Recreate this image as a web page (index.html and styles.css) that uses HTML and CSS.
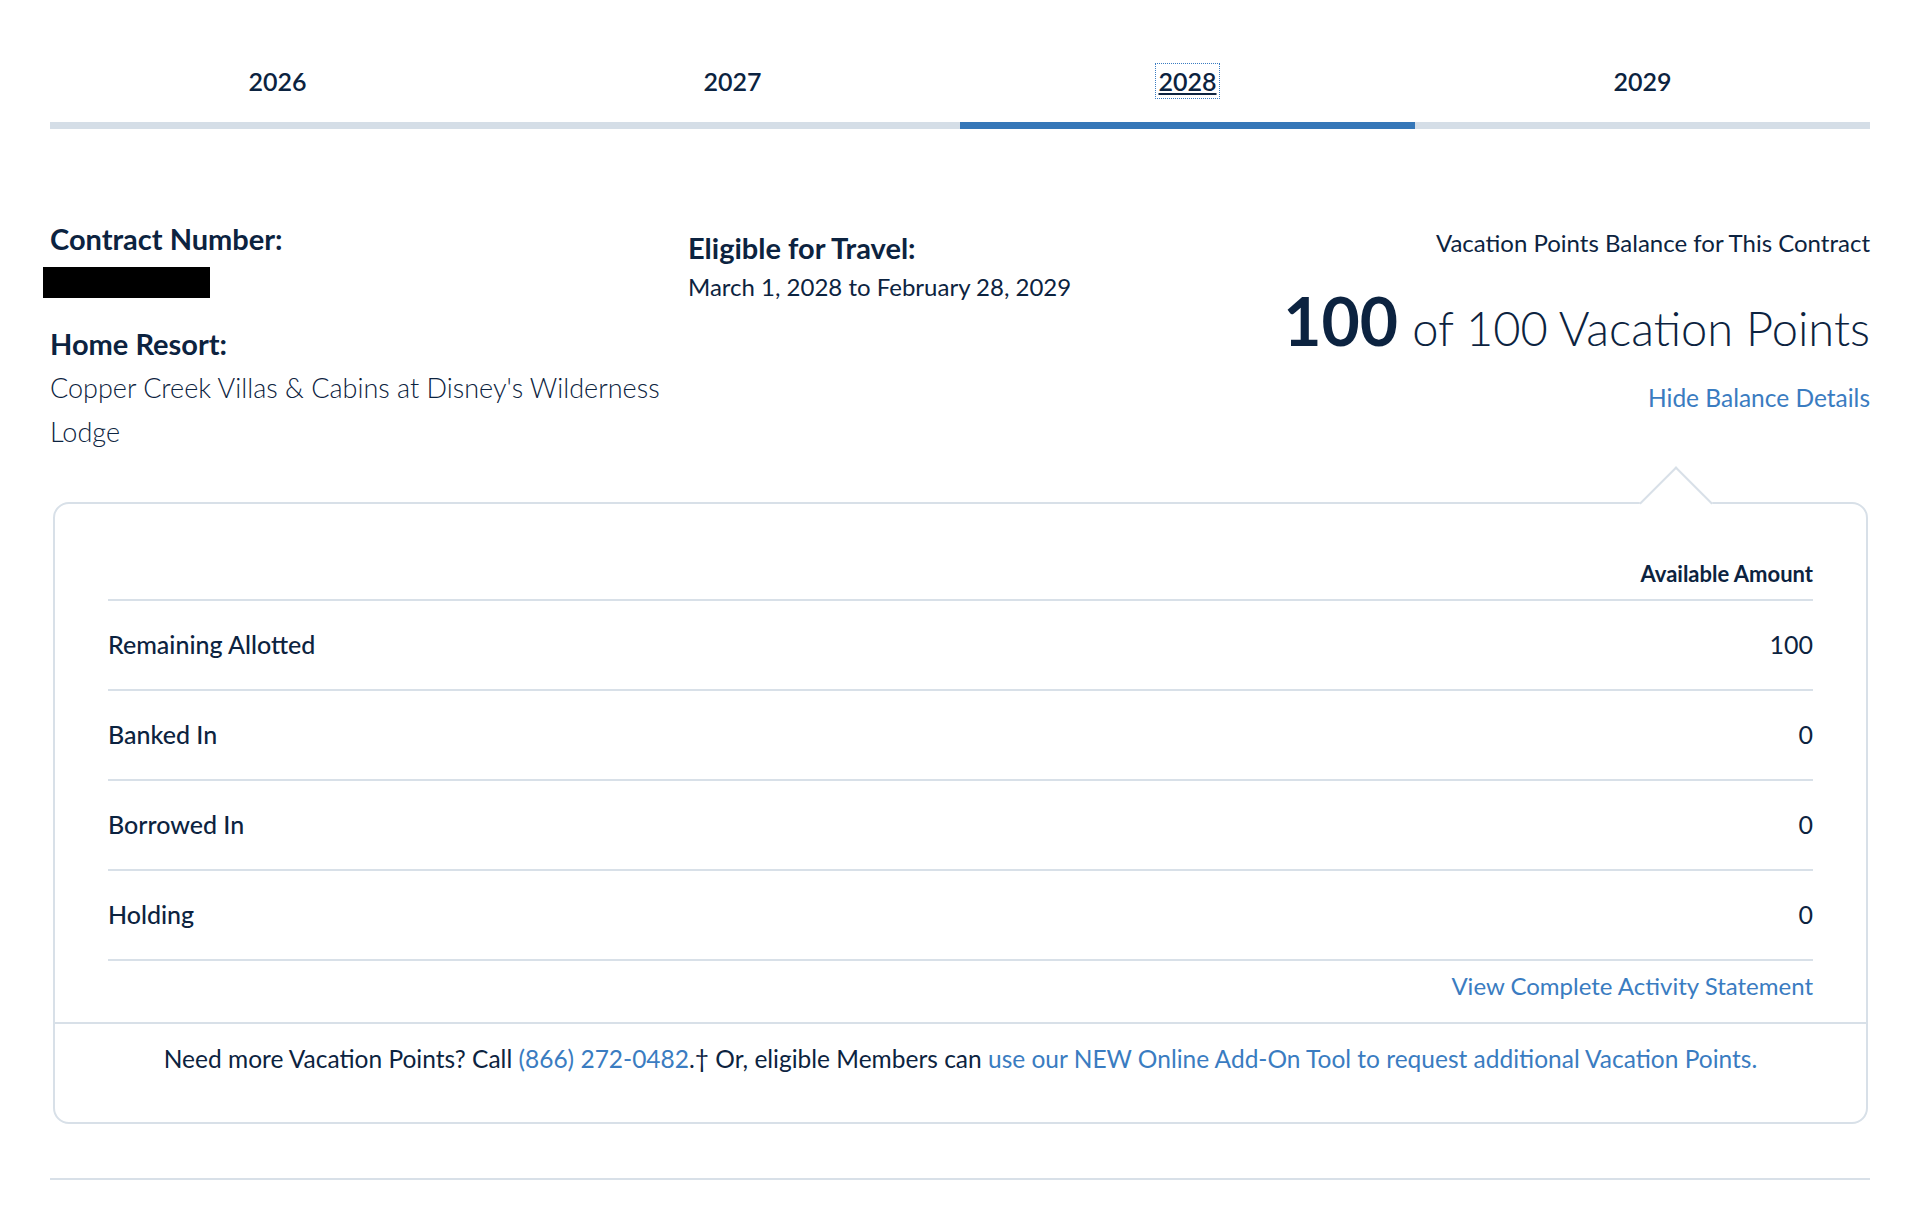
FILE: index.html
```html
<!DOCTYPE html>
<html lang="en-US">
<head>
	<meta charset="UTF-8">
	<title>Vacation Points Balance</title>
	<link rel="stylesheet" href="styles.css">
</head>
<body>
	<div class="page">
		<ul class="year-tabs">
			<li><a href="#">2026</a></li>
			<li><a href="#">2027</a></li>
			<li class="active"><a href="#">2028</a></li>
			<li><a href="#">2029</a></li>
		</ul>

		<div class="contract">
			<div class="contract-info">
				<h3>Contract Number:</h3>
				<span class="redacted"></span>
				<h3 class="home-resort">Home Resort:</h3>
				<p class="resort-name">Copper Creek Villas &amp; Cabins at Disney's Wilderness Lodge</p>
			</div>
			<div class="travel">
				<h3>Eligible for Travel:</h3>
				<p>March 1, 2028 to February 28, 2029</p>
			</div>
			<div class="balance">
				<p class="balance-title">Vacation Points Balance for This Contract</p>
				<p class="balance-total"><strong>100</strong> <span>of 100 Vacation Points</span></p>
				<a href="#" class="toggle">Hide Balance Details</a>
			</div>
		</div>

		<div class="details">
			<div class="details-body">
				<table class="points">
					<thead>
						<tr><th></th><th>Available Amount</th></tr>
					</thead>
					<tbody>
						<tr><td>Remaining Allotted</td><td>100</td></tr>
						<tr><td>Banked In</td><td>0</td></tr>
						<tr><td>Borrowed In</td><td>0</td></tr>
						<tr><td>Holding</td><td>0</td></tr>
					</tbody>
				</table>
				<div class="statement"><a href="#">View Complete Activity Statement</a></div>
			</div>
			<div class="details-footer">
				Need more Vacation Points? Call <a href="#">(866) 272-0482</a>.&dagger; Or, eligible Members can <a href="#">use our NEW Online Add-On Tool to request additional Vacation Points.</a>
			</div>
		</div>

		<hr class="page-rule">
	</div>
</body>
</html>
```

FILE: styles.css
```css
body
{
	margin: 0;
	background: #fff;
	color: #0c2340;
	font-family: Lato, "Open Sans", "Liberation Sans", sans-serif;
	font-size: 24px;
}

a
{
	color: #3a7cc1;
	text-decoration: none;
}

p, h3
{
	margin: 0;
}

.page
{
	padding: 0 50px;
}

/* year tabs */

.year-tabs
{
	display: flex;
	list-style: none;
	margin: 0;
	padding: 0;
}

.year-tabs li
{
	flex: 1;
	text-align: center;
	padding: 64px 0 24px;
	border-bottom: 7px solid #d5dee7;
}

.year-tabs a
{
	color: #0c2340;
	font-weight: 600;
	font-size: 25px;
	line-height: 34px;
}

.year-tabs .active
{
	border-bottom-color: #3577b8;
}

.year-tabs .active a
{
	text-decoration: underline;
	outline: 1px dotted #3a7cc1;
	outline-offset: 2px;
}

/* contract summary */

.contract
{
	display: grid;
	grid-template-columns: 638px 1fr auto;
	padding-top: 93px;
}

.contract h3
{
	font-size: 29px;
	font-weight: 700;
	line-height: 34px;
}

.redacted
{
	display: block;
	width: 167px;
	height: 31px;
	margin: 11px 0 0 -7px;
	background: #000;
}

.home-resort
{
	margin-top: 29px;
}

.resort-name
{
	width: 625px;
	margin-top: 5px;
	font-size: 27px;
	font-weight: 300;
	line-height: 44px;
}

.travel
{
	padding-top: 9px;
}

.travel p
{
	margin-top: 6px;
	line-height: 32px;
}

.balance
{
	text-align: right;
	padding-top: 5px;
}

.balance-title
{
	line-height: 32px;
}

.balance-total
{
	margin-top: 24px;
	line-height: 76px;
}

.balance-total strong
{
	font-size: 66px;
	font-weight: 700;
	margin-right: 8px;
}

.balance-total span
{
	font-size: 47px;
	font-weight: 300;
}

.toggle
{
	display: inline-block;
	margin-top: 7px;
	font-size: 24.5px;
	line-height: 32px;
}

/* balance details panel */

.details
{
	position: relative;
	margin: 48px 2px 0 3px;
	border: 2px solid #d8e0e8;
	border-radius: 16px;
}

.details:before
{
	content: "";
	position: absolute;
	top: -27px;
	right: 164px;
	width: 52px;
	height: 52px;
	background: #fff;
	border-top: 2px solid #d8e0e8;
	border-left: 2px solid #d8e0e8;
	box-sizing: border-box;
	transform: rotate(45deg);
}

.details-body
{
	padding: 55px 53px 20px;
}

.points
{
	width: 100%;
	border-collapse: collapse;
}

.points th
{
	text-align: right;
	font-size: 22px;
	font-weight: 700;
	line-height: 30px;
	padding: 0 0 10px;
	border-bottom: 2px solid #d8e0e8;
}

.points td
{
	height: 85px;
	padding: 0 0 3px;
	font-weight: 500;
	font-size: 25px;
	border-bottom: 2px solid #d8e0e8;
}

.points td:last-child
{
	text-align: right;
	font-weight: 400;
}

.statement
{
	text-align: right;
	margin-top: 9px;
	line-height: 32px;
}

.details-footer
{
	border-top: 2px solid #d8e0e8;
	padding: 19px 0 47px;
	text-align: center;
	font-size: 24.5px;
	line-height: 32px;
}

.page-rule
{
	margin: 54px 0 0;
	border: 0;
	border-top: 2px solid #d8e0e8;
}
```
